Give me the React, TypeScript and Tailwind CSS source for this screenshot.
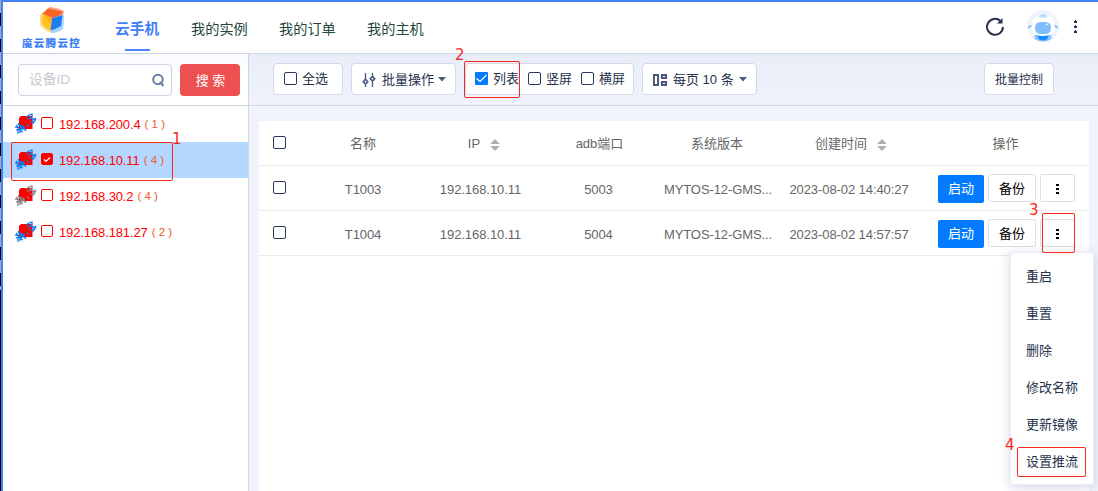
import React from "react";

const devices = [
  { ip: "192.168.200.4", count: 1, online: true, active: false },
  { ip: "192.168.10.11", count: 4, online: true, active: true },
  { ip: "192.168.30.2", count: 4, online: false, active: false },
  { ip: "192.168.181.27", count: 2, online: true, active: false },
];

const rows = [
  { name: "T1003", ip: "192.168.10.11", port: "5003", version: "MYTOS-12-GMS...", created: "2023-08-02 14:40:27" },
  { name: "T1004", ip: "192.168.10.11", port: "5004", version: "MYTOS-12-GMS...", created: "2023-08-02 14:57:57" },
];

const menuItems = ["重启", "重置", "删除", "修改名称", "更新镜像", "设置推流"];

const cols = "grid grid-cols-[45px_118px_117px_119px_118px_146px_167px]";

function Box({ className = "" }: { className?: string }) {
  return <span className={`block h-[13px] w-[13px] shrink-0 rounded-[2px] border border-[#2b3a5c] bg-white ${className}`} />;
}

function Logo() {
  return (
    <svg width="26" height="27" viewBox="0 0 26 27">
      <path d="M4 5 1 8v10q4 5 11 8l2-4z" fill="#ffd98c" />
      <path d="M7 3 11 0q8 1 14 4l-1 5z" fill="#ff9c80" />
      <path d="m23 8 2 1q0 7-1 13-5 4-12 4l1-3z" fill="#a6d2ff" />
      <path d="M3.500 6 13 11l-1.500 12.500Q6 21 3 17.500z" fill="#ffc31a" />
      <path d="M3.500 6.500 9 1.500l14.500 3L21 8.500 13 11z" fill="#f5642b" />
      <path d="m13 11 10.500-3L22 19q-5 3-10.500 4.500z" fill="#1c7df0" />
      <path d="m3.500 6.500 9.500 4.500-.8 5z" fill="#ffab1a" />
    </svg>
  );
}

function Device({ online }: { online: boolean }) {
  const c = online ? "#0b7bf4" : "#858585";
  return (
    <svg width="23" height="22" viewBox="0 0 23 22" className="shrink-0">
      <path d="M6 3h11.500v13H4V5z" fill="#ff0000" />
      <path
        d="m11 4 4-2.500 2-.5v2l-2 2-3 1.500M15 6l2-2m4 1-3 2v-2m3 1-3 4m-2 0-1-2m3 0v3M3 10l3 4M1 12l3 3m-4-1 4 1 4 1-7 1m2-3v4m3-6v6l2 1m-5-3v5m2-4v3m2-8 4 6m-2-5v4m-3-3 5 3m-8-6 2 2m7-2 2 3"
        fill="none"
        stroke={c}
        strokeWidth="1.250"
      />
    </svg>
  );
}

function Sort() {
  return (
    <svg width="10" height="12" viewBox="0 0 10 12" className="ml-[10px] mt-[2px]">
      <path d="M5 0 9.800 5H.2zM.2 7h9.600L5 12z" fill="#adadad" />
    </svg>
  );
}

function Dots() {
  return (
    <svg width="3" height="11" viewBox="0 0 3 11" fill="currentColor" shapeRendering="crispEdges">
      <path d="M0 0h3v2H0zM0 4h3v2H0zM0 8h3v2H0z" />
    </svg>
  );
}

function Caret() {
  return (
    <svg width="8" height="5" viewBox="0 0 8 5" className="shrink-0">
      <path d="M0 0h8L4 4.500z" fill="#4b5b80" />
    </svg>
  );
}

function Header() {
  return (
    <header className="flex h-[52px] shrink-0 border-b border-[#cfd5e2] bg-white">
      <div className="flex w-[96px] flex-col items-center pl-[1px] pt-[5px]">
        <Logo />
        <span className="mt-[1px] whitespace-nowrap text-[10.500px] font-black leading-[16px] tracking-[1.300px] text-[#3d7df5]">魔云腾云控</span>
      </div>
      <nav className="flex pl-[16px] pt-[15px] text-[14.200px] leading-[24px] text-[#264640]">
        <div className="relative w-[76px] text-[14.700px] font-bold text-[#3f7ffa]">
          云手机
          <span className="absolute left-[10px] top-[32px] h-[2px] w-[25px] bg-[#4785fa]" />
        </div>
        <span className="w-[88px]">我的实例</span>
        <span className="w-[88px]">我的订单</span>
        <span>我的主机</span>
      </nav>
      <div className="ml-auto flex">
        <svg width="20" height="20" viewBox="0 0 20 20" className="mr-[22px] mt-[15px]" fill="none" stroke="#27324d" strokeWidth="2">
          <path d="M15.500 4A8 8 0 1 0 18 10" />
          <path d="M17.500 1v5.500H12z" fill="#27324d" stroke="none" />
        </svg>
        <svg width="32" height="32" viewBox="0 0 32 32" className="mr-[14px] mt-[8px]">
          <circle cx="16" cy="16" r="16" fill="#eff3fc" />
          <ellipse cx="16" cy="16.500" rx="12" ry="12" fill="#fff" />
          <path d="M12 7.500q0-3 3-3 1-2 3 0 2 0 2 3z" fill="#b5dcfc" />
          <rect x="8" y="12" width="16" height="12" rx="5.500" fill="#81bdfc" />
          <path d="M1 19q0-4 4-4l-1 2zm30 0q0-4-4-4l1 2z" fill="#79b8fc" />
          <path d="M7.500 26q1-2 3-1l5 1 5-1q3-1 4 1v3q-8 5-17 0z" fill="#8bc4ff" />
          <path d="M10.500 26h11q-1 4.500-5.500 4.500T10.500 26z" fill="#178cff" />
          <circle cx="20" cy="14.500" r=".8" fill="#fff" />
        </svg>
        <svg width="5" height="15" viewBox="0 0 5 15" className="mr-[20px] mt-[18px]" fill="#27324d" shapeRendering="crispEdges">
          <path d="M2 0h1v1h1v1H3v1H2V2H1V1h1zM2 5h1v1h1v1H3v1H2V7H1V6h1zM2 10h1v1h1v1H3v1H2v-1H1v-1h1z" />
          <path d="M1 1h3v1.500H1zM1 6h3v1.500H1zM1 11h3v1.500H1z" />
        </svg>
      </div>
    </header>
  );
}

function Sidebar() {
  return (
    <aside className="flex w-[246px] shrink-0 flex-col border-r border-[#cfd5e5] bg-white">
      <div className="flex h-[52px] shrink-0 items-start gap-[8px] border-b border-[#cfd5e2] bg-linear-to-b from-[#f6f9fe] to-white to-40% pl-[15px] pt-[10px]">
        <div className="flex h-[32px] w-[154px] items-center justify-between rounded-[4px] border border-[#c9d3e4] bg-white pl-[10px] pr-[6px] text-[13.700px] text-[#c8cacf]">
          <span className="pt-[1px]">设备ID</span>
          <svg width="13" height="14" viewBox="0 0 13 14" fill="none" stroke="#6c7ea5" strokeWidth="2">
            <circle cx="6" cy="6.500" r="4.800" />
            <path d="m8 9 3.500 4" />
          </svg>
        </div>
        <div className="flex h-[32px] w-[60px] items-center justify-center rounded-[4px] bg-[#ed5050] pl-[1px] pt-[1px] text-[13px] text-white">搜 索</div>
      </div>
      {devices.map((d) => (
        <div key={d.ip} className={`flex h-[36px] shrink-0 items-center pl-[12px] ${d.active ? "bg-[#b3d7ff]" : ""}`}>
          <Device online={d.online} />
          <span className={`ml-[3px] mt-[-2px] flex h-[12px] w-[12px] shrink-0 items-center justify-center rounded-[2px] border border-[#f00] ${d.active ? "bg-[#f00]" : "bg-white"}`}>
            {d.active && (
              <svg width="8" height="7" viewBox="0 0 8 7" fill="none" stroke="#fff" strokeWidth="1.200">
                <path d="m1 3.500 2 2L7 1.500" />
              </svg>
            )}
          </span>
          <span className="ml-[6px] mt-[1px] whitespace-nowrap text-[13px] tracking-[-0.120px] text-[#f00]">{d.ip}</span>
          <span className="ml-[4px] mt-[2px] whitespace-nowrap text-[11.500px] text-[#f05a28]">( {d.count} )</span>
        </div>
      ))}
    </aside>
  );
}

function Toolbar() {
  const panel = "flex h-[32px] items-center rounded-[4px] border border-[#d3d9e8] bg-white";
  return (
    <div className="flex h-[52px] shrink-0 items-start border-b border-[#cfd5e2] bg-linear-to-b from-[#e8edf8] to-[#f0f3fc] pl-[24px] pt-[9px] text-[13px] text-[#27324d]">
      <div className={`${panel} mr-[8px] w-[70px] pl-[10px]`}>
        <Box className="mr-[5px] mt-[-2px]" />全选
      </div>
      <div className={`${panel} mr-[9px] w-[105px] pl-[10px]`}>
        <svg width="14" height="14" viewBox="0 0 14 14" className="mr-[6px] mt-[1px] shrink-0" fill="none" stroke="#4b5b80">
          <path d="M3.500 0v6m0 5v3M10.500 0v3m0 5v6" strokeWidth="1.300" />
          <path d="m3.500 6.300 2.200 2.400-2.200 2.400-2.200-2.400zM10.500 3.300l2.200 2.400-2.200 2.400-2.200-2.400z" strokeWidth="1.700" />
        </svg>
        <span className="mr-[4px] mt-[2px] whitespace-nowrap">批量操作</span>
        <Caret />
      </div>
      <div className={`${panel} mr-[8px] w-[169px] pl-[9px]`}>
        <span className="mr-[5px] mt-[-2px] flex h-[13px] w-[13px] shrink-0 items-center justify-center rounded-[1px] bg-[#077bff]">
          <svg width="11" height="9" viewBox="0 0 11 9" fill="none" stroke="#fff" strokeWidth="1.100">
            <path d="m.5 4.500 3.500 3L10.500 1" />
          </svg>
        </span>
        <span className="w-[35px] whitespace-nowrap">列表</span>
        <Box className="mr-[5px] mt-[-2px]" />
        <span className="w-[35px]">竖屏</span>
        <Box className="mr-[5px] mt-[-2px]" />横屏
      </div>
      <div className={`${panel} w-[115px] pl-[10px]`}>
        <svg width="14" height="12" viewBox="0 0 14 12" className="mr-[6px] mt-[1px] shrink-0" fill="#4b5b80" fillRule="evenodd" shapeRendering="crispEdges">
          <path d="M0 0h6v12H0zM2 2v8h2V2zM8 0h6v5H8zM10 2v1h2V2zM8 7h6v5H8zM10 9v1h2V9z" />
        </svg>
        <span className="mr-[5px] mt-[2px] whitespace-nowrap">每页 10 条</span>
        <Caret />
      </div>
      <div className={`${panel} ml-auto mr-[44px] w-[70px] justify-center pt-[2px] text-[12px]`}>批量控制</div>
    </div>
  );
}

function Table() {
  return (
    <div className="ml-[10px] mt-[15px] flex w-[830px] flex-1 flex-col bg-white text-[13px] text-[#666]">
      <div className={`${cols} h-[45px] border-b border-[#ebebeb]`}>
        <Box className="ml-[14px] mt-[15px]" />
        <span className="flex items-center justify-center pt-[2px]">名称</span>
        <span className="flex items-center justify-center pl-[7px] pt-[2px]">IP <Sort /></span>
        <span className="flex items-center justify-center pl-[2px] pt-[2px]">adb端口</span>
        <span className="flex items-center justify-center pt-[2px]">系统版本</span>
        <span className="flex items-center justify-center pl-[4px] pt-[2px]">创建时间<Sort /></span>
        <span className="flex items-center justify-center pt-[2px]">操作</span>
      </div>
      {rows.map((r) => (
        <div key={r.name} className={`${cols} h-[45px] whitespace-nowrap border-b border-[#ebebeb] leading-[48px]`}>
          <Box className="ml-[14px] mt-[15px]" />
          <span className="text-center tracking-[-0.100px]">{r.name}</span>
          <span className="text-center tracking-[-0.060px]">{r.ip}</span>
          <span className="text-center tracking-[-0.100px]">{r.port}</span>
          <span className="pl-[2px] text-center tracking-[-0.100px]">{r.version}</span>
          <span className="text-center tracking-[-0.080px]">{r.created}</span>
          <span className="flex pl-[16px] pt-[8px] leading-[27px] text-black">
            <span className="mr-[4px] mt-[1px] h-[28px] w-[46px] rounded-[2px] bg-[#007bff] text-center leading-[28px] text-white">启动</span>
            <span className="mr-[4px] h-[28px] w-[48px] rounded-[2px] border border-[#dcdfe8] text-center leading-[28px]">备份</span>
            <span className="flex h-[28px] w-[35px] justify-center rounded-[2px] border border-[#dcdfe8] pt-[9px]">
              <Dots />
            </span>
          </span>
        </div>
      ))}
    </div>
  );
}

function ContextMenu() {
  return (
    <div className="absolute left-[1010px] top-[252px] flex h-[233px] w-[84px] flex-col rounded-[4px] border border-[#eceff5] bg-white pl-[15px] pt-[5px] text-[13px] text-[#27324d] shadow-[0_2px_12px_rgba(60,80,150,0.240)]">
      {menuItems.map((m) => (
        <span key={m} className="h-[37px] shrink-0 leading-[37px]">{m}</span>
      ))}
    </div>
  );
}

function Annotations() {
  const frame = "absolute rounded-[2px] border border-[#fa281c]";
  const num = "absolute text-[15px] leading-[16px] text-[#fa281c] font-['DejaVu_Sans','Open_Sans',sans-serif]";
  return (
    <>
      <div className={`${frame} left-[11px] top-[142px] h-[39px] w-[162px]`} />
      <span className={`${num} left-[172px] top-[131px]`}>1</span>
      <div className={`${frame} left-[464px] top-[61px] h-[37px] w-[56px]`} />
      <span className={`${num} left-[455px] top-[47px]`}>2</span>
      <div className={`${frame} left-[1042px] top-[213px] h-[40px] w-[33px]`} />
      <span className={`${num} left-[1029px] top-[202px]`}>3</span>
      <div className={`${frame} left-[1017px] top-[447px] h-[30px] w-[69px]`} />
      <span className={`${num} left-[1005px] top-[437px]`}>4</span>
    </>
  );
}

export default function App() {
  return (
    <div className="relative flex h-[491px] w-[1098px] overflow-hidden bg-white font-['Liberation_Sans','Noto_Sans_CJK_SC',sans-serif]">
      <div className="w-px shrink-0 bg-linear-to-b from-[#aaa] from-50% to-black to-50% bg-[length:1px_26px] [background-repeat:repeat-y]">
        <div className="mt-[290px] h-[201px] bg-black" />
      </div>
      <div className="flex min-w-0 flex-1 flex-col border-l-2 border-t-2 border-[#417ffb]">
        <Header />
        <div className="flex min-h-0 flex-1">
          <Sidebar />
          <main className="flex min-w-0 flex-1 flex-col bg-[#f0f3fc]">
            <Toolbar />
            <Table />
          </main>
        </div>
      </div>
      <ContextMenu />
      <Annotations />
    </div>
  );
}
